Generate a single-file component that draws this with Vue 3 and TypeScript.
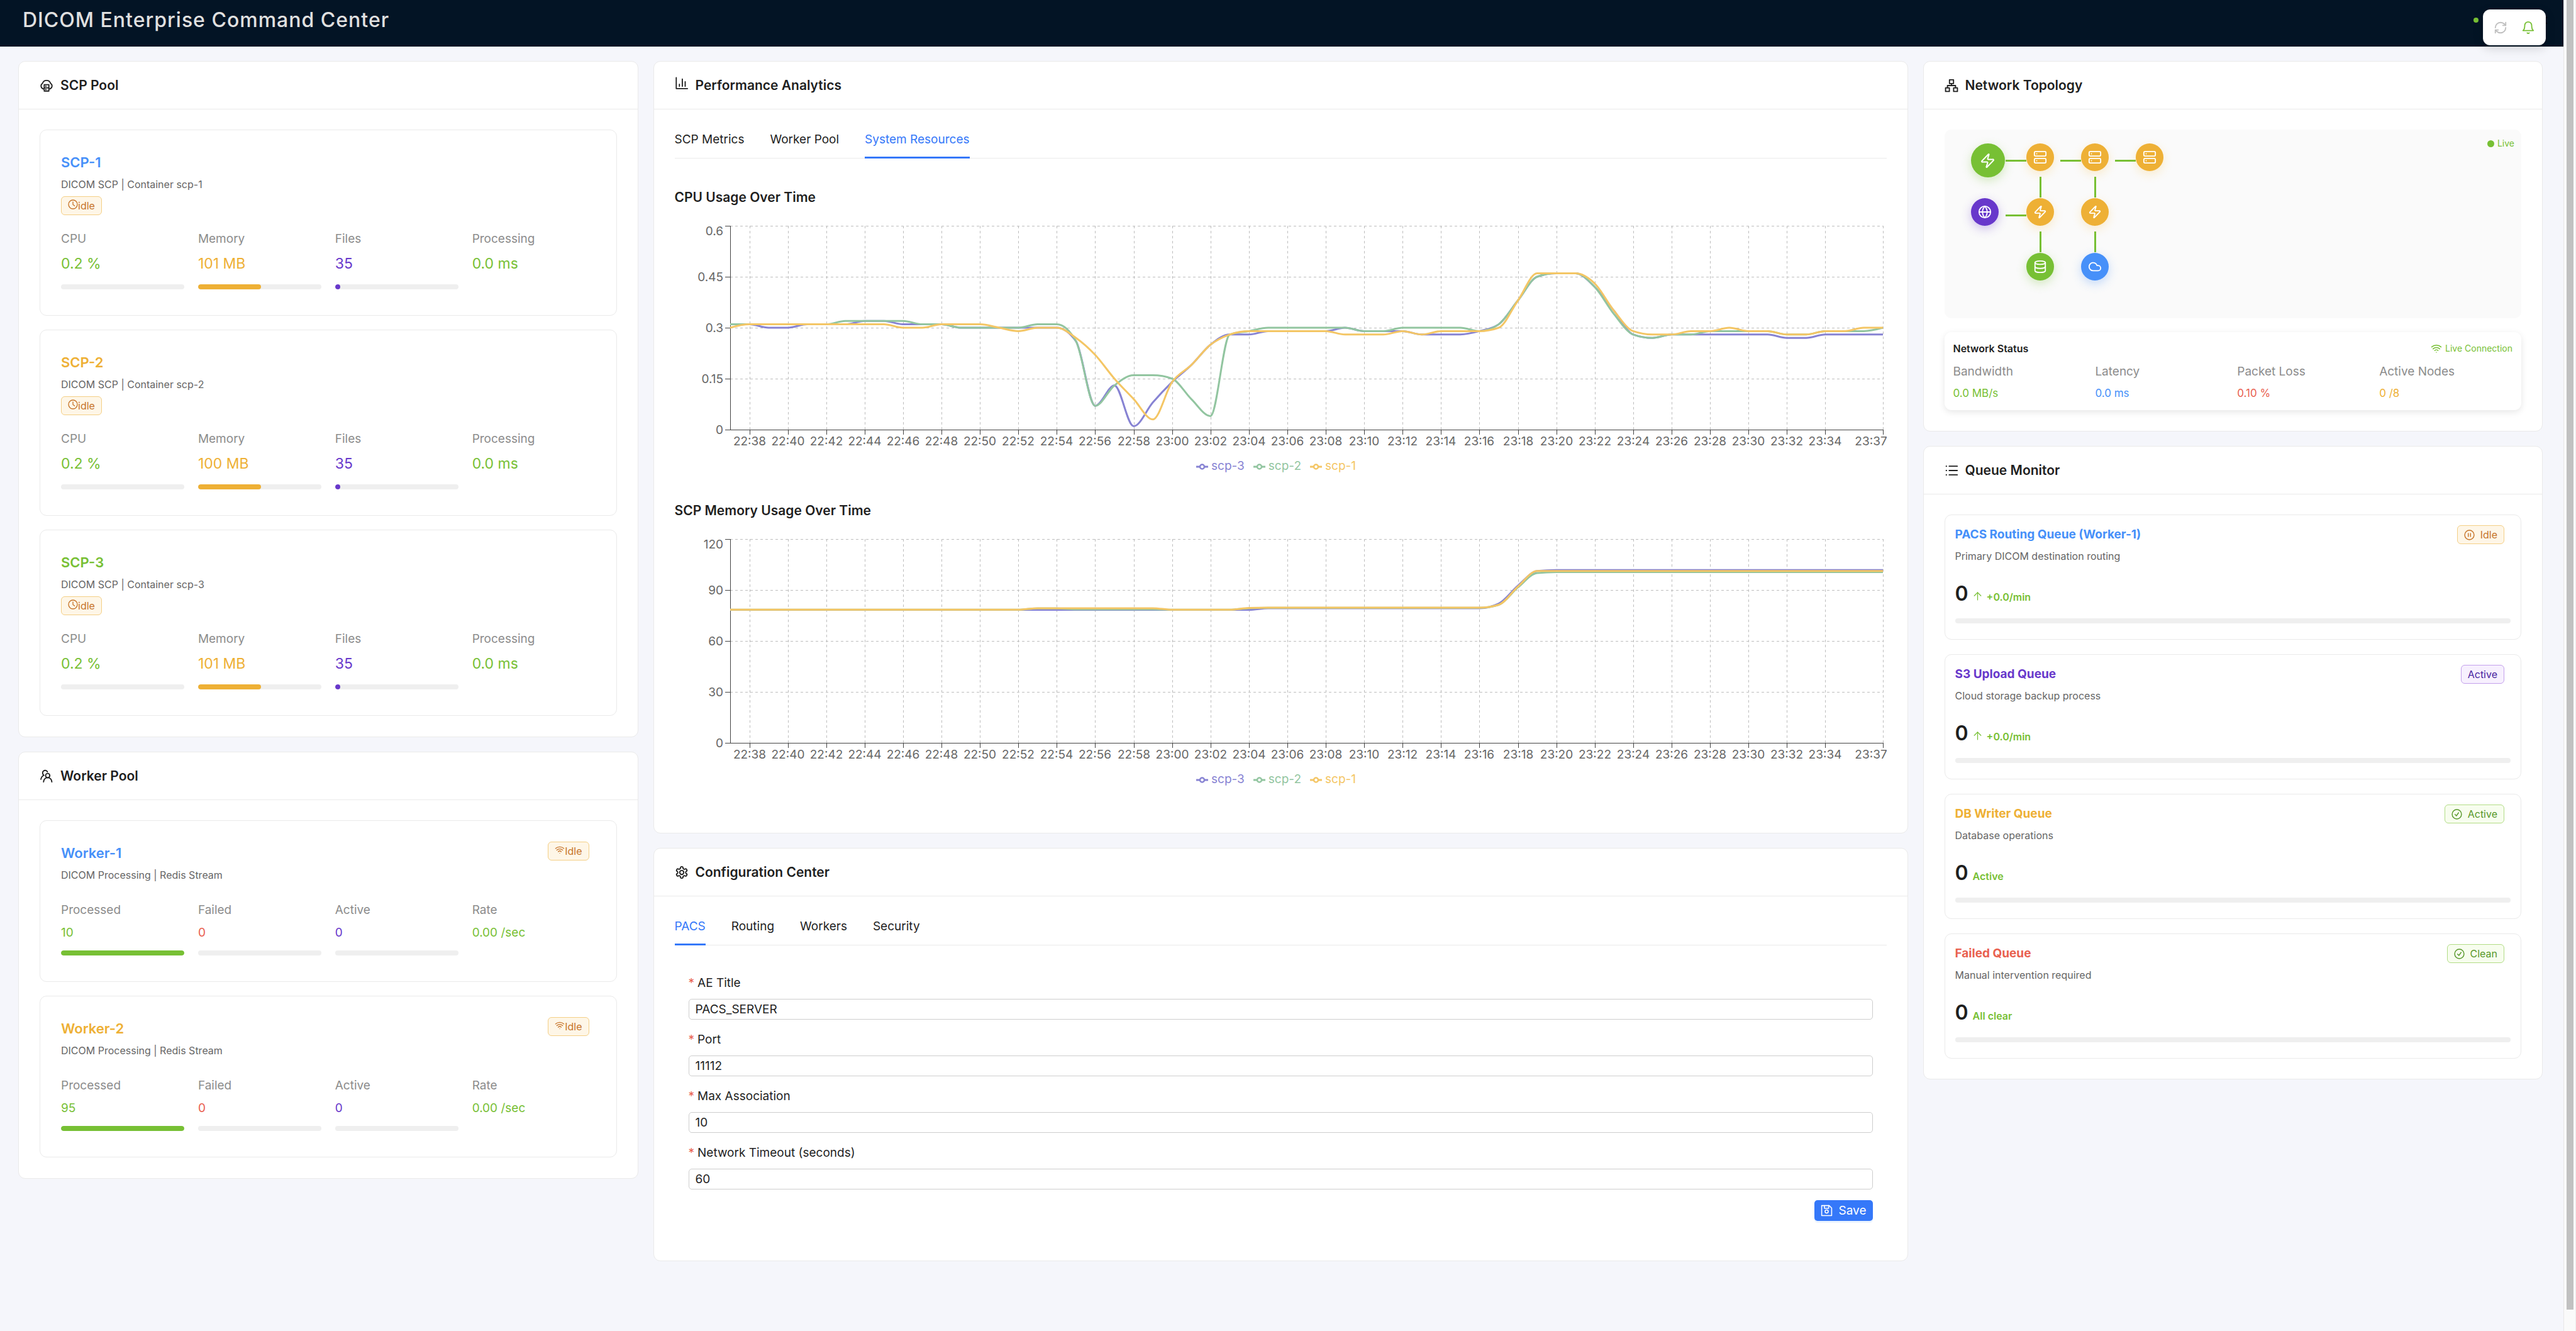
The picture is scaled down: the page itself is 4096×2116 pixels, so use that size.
<script setup lang="ts">
import { h, ref } from 'vue'

type IconProps = { name: string; size?: number; weight?: number }

const glyphs: Record<string, string[]> = {
  cloudServer: [
    'M6.5 18A5.4 5.4 0 0 1 5 8.2A7.4 7.4 0 0 1 19 8.2A5.4 5.4 0 0 1 17.5 18',
    'M8 10.5H16V21.5H8Z',
    'M8 16H16',
    'M10.6 13.3H11',
    'M10.6 18.8H11',
  ],
  team: [
    'M14 7.2a3.7 3.7 0 1 1 0 7.4a3.7 3.7 0 0 1 0-7.4Z',
    'M6.8 22c.5-4.6 3.4-7.4 7.2-7.4s6.7 2.8 7.2 7.4',
    'M13.6 4.6A4.4 4.4 0 1 0 6.6 9.6',
    'M7.4 10.4C4.4 11.6 2.8 14 2.2 17.4',
  ],
  bars: ['M2.5 1.5V20.5H22', 'M8 13V16.5', 'M13 4V16.5', 'M18 8.5V16.5'],
  apartment: [
    'M8.5 2H15.5V8.5H8.5Z',
    'M12 8.5V12',
    'M5 16V12H19V16',
    'M1.7 16H8.3V22.3H1.7Z',
    'M15.7 16H22.3V22.3H15.7Z',
  ],
  list: ['M8 4.5H22', 'M8 12H22', 'M8 19.5H22', 'M2.8 4.5H3.4', 'M2.8 12H3.4', 'M2.8 19.5H3.4'],
  gear: [
    'M12.22 2h-.44a2 2 0 0 0-2 2v.18a2 2 0 0 1-1 1.73l-.43.25a2 2 0 0 1-2 0l-.15-.08a2 2 0 0 0-2.73.73l-.22.38a2 2 0 0 0 .73 2.73l.15.1a2 2 0 0 1 1 1.72v.51a2 2 0 0 1-1 1.74l-.15.09a2 2 0 0 0-.73 2.73l.22.38a2 2 0 0 0 2.73.73l.15-.08a2 2 0 0 1 2 0l.43.25a2 2 0 0 1 1 1.73V20a2 2 0 0 0 2 2h.44a2 2 0 0 0 2-2v-.18a2 2 0 0 1 1-1.73l.43-.25a2 2 0 0 1 2 0l.15.08a2 2 0 0 0 2.73-.73l.22-.39a2 2 0 0 0-.73-2.73l-.15-.08a2 2 0 0 1-1-1.74v-.5a2 2 0 0 1 1-1.74l.15-.09a2 2 0 0 0 .73-2.73l-.22-.38a2 2 0 0 0-2.73-.73l-.15.08a2 2 0 0 1-2 0l-.43-.25a2 2 0 0 1-1-1.73V4a2 2 0 0 0-2-2z',
    'M12 8.5a3.5 3.5 0 1 1 0 7a3.5 3.5 0 0 1 0-7Z',
  ],
  clock: ['M12 1.5a10.5 10.5 0 1 1 0 21a10.5 10.5 0 0 1 0-21Z', 'M12 6V12.5L16 15.5'],
  wifi: [
    'M12 20h.01',
    'M2 8.82a15 15 0 0 1 20 0',
    'M5 12.859a10 10 0 0 1 14 0',
    'M8.5 16.429a5 5 0 0 1 7 0',
  ],
  pause: ['M12 1.5a10.5 10.5 0 1 1 0 21a10.5 10.5 0 0 1 0-21Z', 'M9.5 8.5V15.5', 'M14.5 8.5V15.5'],
  check: ['M12 1.5a10.5 10.5 0 1 1 0 21a10.5 10.5 0 0 1 0-21Z', 'M8 12.5L11 15.5L16 8.5'],
  up: ['M12 22V3', 'M3.5 11.5L12 3L20.5 11.5'],
  save: [
    'M2 2H17L22 7V22H2Z',
    'M7.5 2V7.5H16V2',
    'M12 10.8a3.2 3.2 0 1 1 0 6.4a3.2 3.2 0 0 1 0-6.4Z',
  ],
  zap: [
    'M4 14a1 1 0 0 1-.78-1.63l9.9-10.2a.5.5 0 0 1 .86.46l-1.92 6.02A1 1 0 0 0 13 10h7a1 1 0 0 1 .78 1.63l-9.9 10.2a.5.5 0 0 1-.86-.46l1.92-6.02A1 1 0 0 0 11 14z',
  ],
  server: [
    'M4 2H20a2 2 0 0 1 2 2V8a2 2 0 0 1-2 2H4a2 2 0 0 1-2-2V4a2 2 0 0 1 2-2Z',
    'M4 14H20a2 2 0 0 1 2 2V20a2 2 0 0 1-2 2H4a2 2 0 0 1-2-2V16a2 2 0 0 1 2-2Z',
    'M6 6H6.01',
    'M6 18H6.01',
  ],
  globe: [
    'M12 2a10 10 0 1 1 0 20a10 10 0 0 1 0-20Z',
    'M12 2a14.5 14.5 0 0 0 0 20 14.5 14.5 0 0 0 0-20',
    'M2 12h20',
  ],
  database: [
    'M3 5A9 3 0 0 1 21 5A9 3 0 0 1 3 5',
    'M3 5V19A9 3 0 0 0 21 19V5',
    'M3 12A9 3 0 0 0 21 12',
  ],
  cloud: ['M17.5 19H9a7 7 0 1 1 6.71-9h1.79a4.5 4.5 0 1 1 0 9Z'],
  refresh: [
    'M3 12a9 9 0 0 1 9-9 9.75 9.75 0 0 1 6.74 2.74L21 8',
    'M21 3v5h-5',
    'M21 12a9 9 0 0 1-9 9 9.75 9.75 0 0 1-6.74-2.74L3 16',
    'M8 16H3v5',
  ],
  bell: ['M6 8a6 6 0 0 1 12 0c0 7 3 9 3 9H3s3-2 3-9', 'M10.3 21a1.94 1.94 0 0 0 3.4 0'],
}

const Icon = (props: IconProps) =>
  h(
    'svg',
    {
      viewBox: '0 0 24 24',
      width: props.size ?? 22,
      height: props.size ?? 22,
      fill: 'none',
      stroke: 'currentColor',
      'stroke-width': props.weight ?? 2,
      'stroke-linecap': 'round',
      'stroke-linejoin': 'round',
      'aria-hidden': 'true',
    },
    (glyphs[props.name] ?? []).map((d) => h('path', { d })),
  )
Icon.props = ['name', 'size', 'weight']

interface Metric {
  label: string
  value: string
  tone: string
  percent?: number
}

const scps: { name: string; tone: string; detail: string; metrics: Metric[] }[] = [
  { n: 1, tone: 'blue', mb: 101 },
  { n: 2, tone: 'amber', mb: 100 },
  { n: 3, tone: 'green', mb: 101 },
].map((s) => ({
  name: `SCP-${s.n}`,
  tone: s.tone,
  detail: `DICOM SCP | Container scp-${s.n}`,
  metrics: [
    { label: 'CPU', value: '0.2 %', tone: 'green', percent: 0 },
    { label: 'Memory', value: `${s.mb} MB`, tone: 'amber', percent: 51 },
    { label: 'Files', value: '35', tone: 'purple', percent: 4 },
    { label: 'Processing', value: '0.0 ms', tone: 'green' },
  ],
}))

const workers: { name: string; tone: string; metrics: Metric[] }[] = [
  { n: 1, tone: 'blue', done: 10 },
  { n: 2, tone: 'amber', done: 95 },
].map((w) => ({
  name: `Worker-${w.n}`,
  tone: w.tone,
  metrics: [
    { label: 'Processed', value: String(w.done), tone: 'green', percent: 100 },
    { label: 'Failed', value: '0', tone: 'red', percent: 0 },
    { label: 'Active', value: '0', tone: 'purple', percent: 0 },
    { label: 'Rate', value: '0.00 /sec', tone: 'green' },
  ],
}))

const analyticsTabs = ['SCP Metrics', 'Worker Pool', 'System Resources']
const analyticsTab = ref('System Resources')
const configTabs = ['PACS', 'Routing', 'Workers', 'Security']
const configTab = ref('PACS')

const fields = ref([
  { id: 'ae-title', label: 'AE Title', value: 'PACS_SERVER' },
  { id: 'port', label: 'Port', value: '11112' },
  { id: 'max-association', label: 'Max Association', value: '10' },
  { id: 'network-timeout', label: 'Network Timeout (seconds)', value: '60' },
])

/* ---- charts ---- */
const plot = { left: 88, top: 8, width: 1833, height: 324 }
const plotRight = plot.left + plot.width
const plotBottom = plot.top + plot.height
const minutes = 60
const xAt = (i: number) => plot.left + (plot.width * i) / minutes

const timeTicks = [...Array.from({ length: 29 }, (_, k) => 1 + 2 * k), 60].map((i) => {
  const t = 22 * 60 + 37 + i
  const label = `${Math.floor(t / 60)}:${String(t % 60).padStart(2, '0')}`
  return { x: Math.round(xAt(i)), label, labelX: i === 60 ? plotRight - 19 : Math.round(xAt(i)) }
})

/* Monotone cubic interpolation through evenly spaced samples */
function curve(values: number[], max: number): string {
  const xs = values.map((_, i) => xAt(i))
  const ys = values.map((v) => plotBottom - (v / max) * plot.height)
  const step = plot.width / minutes
  const slope = (i: number) => (ys[i + 1] - ys[i]) / step
  const n = values.length
  const m = ys.map((_, i) => {
    if (i === 0 || i === n - 1) return 0
    const a = slope(i - 1)
    const b = slope(i)
    return (Math.sign(a) + Math.sign(b)) * Math.min(Math.abs(a), Math.abs(b), 0.5 * Math.abs((a + b) / 2))
  })
  m[0] = (3 * slope(0) - m[1]) / 2
  m[n - 1] = (3 * slope(n - 2) - m[n - 2]) / 2
  let d = `M${xs[0]},${ys[0]}`
  for (let i = 0; i < n - 1; i++) {
    const c = step / 3
    d += `C${xs[i] + c},${ys[i] + c * m[i]},${xs[i + 1] - c},${ys[i + 1] - c * m[i + 1]},${xs[i + 1]},${ys[i + 1]}`
  }
  return d
}

const rep = (v: number, n: number): number[] => Array(n).fill(v)
const colors = { 'scp-3': '#8783d3', 'scp-2': '#92c5a0', 'scp-1': '#f4c665' }

const cpu = {
  'scp-3': [31, 31, 30, 30, 31, 31, 31, 32, 32, 31, 31, 31, 30, 30, 30, 30, 30, 30, 26, 7, 13, 1, 8, 14, 19, 25, 28, 28, 29, 29, 29, 29, 30, 29, 29, 29, 28, 28, 28, 29, 31, 38, 45, 46, 46, 42, 35, 28, 27, 28, 28, 28, 28, 28, 28, 27, 27, 28, 28, 28, 28],
  'scp-2': [31, 31, 31, 31, 31, 31, 32, 32, 32, 32, 31, 31, 30, 30, 30, 30, 31, 31, 26, 7, 13, 16, 16, 15, 9, 4, 28, 29, 30, 30, 30, 30, 30, 29, 29, 30, 30, 30, 30, 29, 31, 38, 45, 46, 46, 42, 34, 28, 27, 28, 28, 29, 29, 29, 29, 28, 28, 29, 29, 29, 30],
  'scp-1': [30, 31, 31, 31, 31, 31, 31, 31, 31, 30, 30, 31, 31, 31, 30, 29, 30, 30, 27, 22, 15, 9, 3, 14, 19, 25, 28, 29, 29, 29, 29, 29, 28, 28, 28, 29, 28, 29, 29, 29, 30, 38, 46, 46, 46, 43, 35, 29, 28, 28, 29, 29, 30, 29, 29, 28, 28, 29, 29, 30, 30],
}
const memory = {
  'scp-3': [...rep(78.3, 28), ...rep(79.3, 12), 82, 92.5, 101.2, ...rep(101.8, 18)],
  'scp-2': [...rep(78.4, 16), 79.2, 79.2, ...rep(78.6, 5), ...rep(78.4, 4), 79.3, ...rep(79.5, 12), 81.3, 91.5, 100, ...rep(100.6, 18)],
  'scp-1': [...rep(78.4, 16), ...rep(79.3, 7), ...rep(78.4, 4), 79.4, ...rep(79.6, 12), 81.3, 92, ...rep(101.2, 19)],
}

function chart(title: string, data: Record<string, number[]>, max: number, labels: string[]) {
  return {
    title,
    yTicks: labels.map((label, k) => {
      const y = plotBottom - (plot.height * k) / (labels.length - 1)
      return { label, y, labelY: k === labels.length - 1 ? y + 15 : y + 7 }
    }),
    lines: Object.entries(data).map(([name, values]) => ({
      name,
      color: colors[name as keyof typeof colors],
      d: curve(values, max),
    })),
  }
}
const charts = [
  chart('CPU Usage Over Time', cpu, 60, ['0', '0.15', '0.3', '0.45', '0.6']),
  chart('SCP Memory Usage Over Time', memory, 120, ['0', '30', '60', '90', '120']),
]

/* ---- topology ---- */
const nodes = [
  { x: 42, y: 22, tone: 'green', icon: 'zap', hub: true },
  { x: 130, y: 22, tone: 'amber', icon: 'server' },
  { x: 217, y: 22, tone: 'amber', icon: 'server' },
  { x: 304, y: 22, tone: 'amber', icon: 'server' },
  { x: 42, y: 109, tone: 'purple', icon: 'globe' },
  { x: 130, y: 109, tone: 'amber', icon: 'zap' },
  { x: 217, y: 109, tone: 'amber', icon: 'zap' },
  { x: 130, y: 196, tone: 'green', icon: 'database' },
  { x: 217, y: 196, tone: 'blue', icon: 'cloud' },
]
const links = [
  { x: 97, y: 48 },
  { x: 184, y: 48 },
  { x: 271, y: 48 },
  { x: 97, y: 135 },
  { x: 151, y: 75, down: true },
  { x: 238, y: 75, down: true },
  { x: 151, y: 162, down: true },
  { x: 238, y: 162, down: true },
]

const networkMetrics: Metric[] = [
  { label: 'Bandwidth', value: '0.0 MB/s', tone: 'green' },
  { label: 'Latency', value: '0.0 ms', tone: 'blue' },
  { label: 'Packet Loss', value: '0.10 %', tone: 'red' },
  { label: 'Active Nodes', value: '0 /8', tone: 'amber' },
]

const queues = [
  { name: 'PACS Routing Queue (Worker-1)', tone: 'blue', detail: 'Primary DICOM destination routing', tag: 'Idle', tagTone: 'tag-amber', icon: 'pause', note: '+0.0/min', rising: true },
  { name: 'S3 Upload Queue', tone: 'purple', detail: 'Cloud storage backup process', tag: 'Active', tagTone: 'tag-purple', icon: '', note: '+0.0/min', rising: true },
  { name: 'DB Writer Queue', tone: 'amber', detail: 'Database operations', tag: 'Active', tagTone: 'tag-green', icon: 'check', note: 'Active', rising: false },
  { name: 'Failed Queue', tone: 'red', detail: 'Manual intervention required', tag: 'Clean', tagTone: 'tag-green', icon: 'check', note: 'All clear', rising: false },
]
</script>

<template>
  <div class="shell">
    <div class="page">
      <header class="topbar">
        <h1>DICOM Enterprise Command Center</h1>
        <div class="health"><span class="health-dot"></span><span class="health-text">t</span></div>
        <div class="actions">
          <button type="button" class="icon-button muted" aria-label="Refresh"><Icon name="refresh" /></button>
          <button type="button" class="icon-button green" aria-label="Notifications"><Icon name="bell" /></button>
        </div>
      </header>

      <main class="columns">
        <div class="column">
          <section class="card">
            <h2 class="card-head"><Icon name="cloudServer" />SCP Pool</h2>
            <div class="card-body stack">
              <article v-for="scp in scps" :key="scp.name" class="tile scp">
                <h3 :class="scp.tone">{{ scp.name }}</h3>
                <p class="detail">{{ scp.detail }}</p>
                <span class="tag tag-amber tight"><Icon name="clock" :size="16" />idle</span>
                <div class="metrics">
                  <div v-for="m in scp.metrics" :key="m.label">
                    <div class="metric-label">{{ m.label }}</div>
                    <div class="metric-value" :class="m.tone">{{ m.value }}</div>
                    <div v-if="m.percent !== undefined" class="bar" :class="m.tone">
                      <span :style="{ width: m.percent + '%' }"></span>
                    </div>
                  </div>
                </div>
              </article>
            </div>
          </section>

          <section class="card">
            <h2 class="card-head"><Icon name="team" />Worker Pool</h2>
            <div class="card-body stack">
              <article v-for="w in workers" :key="w.name" class="tile worker">
                <div class="tile-head">
                  <h3 :class="w.tone">{{ w.name }}</h3>
                  <span class="tag tag-amber tight"><Icon name="wifi" :size="16" />Idle</span>
                </div>
                <p class="detail">DICOM Processing | Redis Stream</p>
                <div class="metrics">
                  <div v-for="m in w.metrics" :key="m.label">
                    <div class="metric-label">{{ m.label }}</div>
                    <div class="metric-value" :class="m.tone">{{ m.value }}</div>
                    <div v-if="m.percent !== undefined" class="bar" :class="m.tone">
                      <span :style="{ width: m.percent + '%' }"></span>
                    </div>
                  </div>
                </div>
              </article>
            </div>
          </section>
        </div>

        <div class="column wide">
          <section class="card">
            <h2 class="card-head"><Icon name="bars" class="raised" />Performance Analytics</h2>
            <div class="card-body analytics">
              <div class="tabs" role="tablist">
                <button
                  v-for="t in analyticsTabs"
                  :key="t"
                  type="button"
                  role="tab"
                  class="tab"
                  :class="{ active: t === analyticsTab }"
                  :aria-selected="t === analyticsTab"
                  @click="analyticsTab = t"
                >{{ t }}</button>
              </div>
              <section v-for="c in charts" :key="c.title" class="chart">
                <h3>{{ c.title }}</h3>
                <svg viewBox="0 0 1927 372" role="img" :aria-label="c.title">
                  <g stroke="#bebebe" stroke-dasharray="4 4">
                    <line v-for="y in c.yTicks" :key="y.label" :x1="plot.left" :x2="plotRight" :y1="y.y" :y2="y.y" shape-rendering="crispEdges" />
                    <line v-for="t in timeTicks" :key="t.label" :x1="t.x" :x2="t.x" :y1="plot.top" :y2="plotBottom" shape-rendering="crispEdges" />
                  </g>
                  <g stroke="#444" shape-rendering="crispEdges">
                    <line :x1="plot.left" :x2="plotRight" :y1="plotBottom" :y2="plotBottom" />
                    <line :x1="plot.left" :x2="plot.left" :y1="plot.top" :y2="plotBottom" />
                    <line v-for="y in c.yTicks" :key="y.label" :x1="plot.left - 8" :x2="plot.left" :y1="y.y" :y2="y.y" />
                    <line v-for="t in timeTicks" :key="t.label" :x1="t.x" :x2="t.x" :y1="plotBottom" :y2="plotBottom + 8" />
                  </g>
                  <g fill="#666" font-size="19">
                    <text v-for="y in c.yTicks" :key="y.label" :x="plot.left - 11" :y="y.labelY" text-anchor="end">{{ y.label }}</text>
                    <text v-for="t in timeTicks" :key="t.label" :x="t.labelX" :y="plotBottom + 25" text-anchor="middle">{{ t.label }}</text>
                  </g>
                  <path v-for="l in c.lines" :key="l.name" :d="l.d" :stroke="l.color" fill="none" stroke-width="3" />
                </svg>
                <ul class="legend">
                  <li v-for="l in c.lines" :key="l.name" :style="{ color: l.color }">
                    <svg width="19" height="19" viewBox="0 0 19 19" fill="none" stroke="currentColor" stroke-width="3">
                      <path d="M0 10H6M13 10H19" />
                      <circle cx="9.5" cy="10" r="3.5" stroke-width="2.5" />
                    </svg>
                    {{ l.name }}
                  </li>
                </ul>
              </section>
            </div>
          </section>

          <section class="card">
            <h2 class="card-head"><Icon name="gear" />Configuration Center</h2>
            <div class="card-body config">
              <div class="tabs" role="tablist">
                <button
                  v-for="t in configTabs"
                  :key="t"
                  type="button"
                  role="tab"
                  class="tab"
                  :class="{ active: t === configTab }"
                  :aria-selected="t === configTab"
                  @click="configTab = t"
                >{{ t }}</button>
              </div>
              <form class="form" @submit.prevent>
                <div v-for="f in fields" :key="f.id" class="field">
                  <label :for="f.id"><span class="required">*</span>{{ f.label }}</label>
                  <input :id="f.id" v-model="f.value" type="text" />
                </div>
                <button type="submit" class="save"><Icon name="save" :size="19" />Save</button>
              </form>
            </div>
          </section>
        </div>

        <div class="column">
          <section class="card">
            <h2 class="card-head"><Icon name="apartment" />Network Topology</h2>
            <div class="card-body">
              <div class="topology">
                <span
                  v-for="(l, i) in links"
                  :key="'l' + i"
                  class="link"
                  :class="{ down: l.down }"
                  :style="{ left: l.x + 'px', top: l.y + 'px' }"
                ></span>
                <span
                  v-for="(n, i) in nodes"
                  :key="'n' + i"
                  class="node"
                  :class="['node-' + n.tone, { hub: n.hub }]"
                  :style="{ left: n.x + 'px', top: n.y + 'px' }"
                ><Icon :name="n.icon" :size="n.hub ? 25 : 22" /></span>
                <span class="live"><span class="live-dot"></span>Live</span>
              </div>
              <div class="status">
                <div class="status-head">
                  <h3>Network Status</h3>
                  <span class="connection"><Icon name="wifi" :size="18" />Live Connection</span>
                </div>
                <div class="metrics">
                  <div v-for="m in networkMetrics" :key="m.label">
                    <div class="metric-label">{{ m.label }}</div>
                    <div class="metric-value" :class="m.tone">{{ m.value }}</div>
                  </div>
                </div>
              </div>
            </div>
          </section>

          <section class="card">
            <h2 class="card-head"><Icon name="list" />Queue Monitor</h2>
            <div class="card-body stack queues">
              <article v-for="q in queues" :key="q.name" class="tile queue">
                <div class="tile-head">
                  <h3 :class="q.tone">{{ q.name }}</h3>
                  <span class="tag" :class="q.tagTone"><Icon v-if="q.icon" :name="q.icon" :size="17" />{{ q.tag }}</span>
                </div>
                <p class="detail">{{ q.detail }}</p>
                <div class="count">
                  <strong>0</strong>
                  <Icon v-if="q.rising" name="up" :size="15" class="green" />
                  <span class="note green">{{ q.note }}</span>
                </div>
                <div class="bar"></div>
              </article>
            </div>
          </section>
        </div>
      </main>
    </div>
    <div class="rail" aria-hidden="true"><div class="thumb"></div></div>
  </div>
</template>

<style>
body {
  background: #f5f6fb;
}
</style>

<style scoped>
* {
  box-sizing: border-box;
}
h1, h2, h3, p, ul {
  margin: 0;
  padding: 0;
}
button, input {
  font: inherit;
  color: inherit;
}
.shell {
  display: flex;
  min-height: 100vh;
  font-family: Inter, "Noto Sans", sans-serif;
  font-size: 19px;
  line-height: 30px;
  color: #1f1f1f;
}
.page {
  flex: 1;
  min-width: 0;
}
.rail {
  width: 20px;
  height: 100vh;
  padding: 0 4px;
  background: #fafafa;
  border-left: 1px solid #e8e8e8;
  border-right: 1px solid #ededed;
}
.thumb {
  height: 98.4%;
  width: 11px;
  background: #c1c1c1;
}
.blue { color: #4690f9; }
.amber { color: #eeb035; }
.green { color: #77c034; }
.purple { color: #6838cb; }
.red { color: #e9604f; }

.topbar {
  position: relative;
  display: flex;
  justify-content: space-between;
  align-items: center;
  height: 75px;
  padding: 0 25px 11px 36px;
  background: #031425;
  border-bottom: 1px solid #e4e4e4;
}
.topbar h1 {
  font-size: 32px;
  line-height: 44px;
  font-weight: 500;
  letter-spacing: 1px;
  color: #e0e0e0;
}
.health {
  display: flex;
  justify-content: space-between;
  align-items: center;
  width: 118px;
}
.health-dot {
  width: 8px;
  height: 8px;
  border-radius: 50%;
  background: #77c034;
}
.health-text {
  color: #000;
}
.actions {
  position: absolute;
  top: 15px;
  right: 28px;
  display: flex;
  align-items: center;
  gap: 22px;
  height: 57px;
  padding: 0 16px;
  background: #fff;
  border: 1px solid #f0f0f0;
  border-radius: 11px;
  box-shadow: 0 5px 16px rgba(0, 0, 0, 0.15);
}
.icon-button {
  display: flex;
  padding: 0;
  border: 0;
  background: none;
}
.muted {
  color: #bfbfbf;
}

.columns {
  display: grid;
  grid-template-columns: repeat(4, minmax(0, 1fr));
  gap: 24px;
  align-items: start;
  padding: 22px 33px 24px 29px;
}
.column {
  display: flex;
  flex-direction: column;
  gap: 23px;
}
.wide {
  grid-column: span 2;
}
.card {
  background: #fff;
  border: 1px solid #eaeaea;
  border-radius: 11px;
}
.card-head {
  display: flex;
  align-items: center;
  gap: 11px;
  height: 76px;
  padding: 0 33px;
  border-bottom: 1px solid #eaeaea;
  font-size: 21px;
  line-height: 34px;
  font-weight: 600;
}
.raised {
  margin-bottom: 6px;
}
.card-body {
  padding: 32px 33px 33px;
}
.stack {
  display: flex;
  flex-direction: column;
  gap: 22px;
}
.queues {
  gap: 23px;
  padding-bottom: 32px;
}
.tile {
  background: #fff;
  border: 1px solid #eaeaea;
  border-radius: 11px;
}
.tile h3 {
  font-size: 22px;
  line-height: 36px;
  font-weight: 600;
}
.tile-head {
  display: flex;
  justify-content: space-between;
  align-items: flex-start;
  padding-right: 10px;
}
.detail {
  margin-top: 5px;
  font-size: 16px;
  line-height: 24px;
  color: #666;
}
.scp {
  padding: 33px 33px 41px;
}
.scp .tag {
  margin-top: 7px;
}
.scp .metrics {
  margin-top: 23px;
}
.scp .metric-value {
  margin-top: 6px;
  font-size: 23px;
}
.scp .bar {
  margin-top: 15px;
}
.worker {
  padding: 33px 33px 41px;
}
.worker .metrics {
  margin-top: 29px;
}
.worker .metric-value {
  margin-top: 3px;
}
.worker .bar {
  margin-top: 10px;
}
.metrics {
  display: grid;
  grid-template-columns: repeat(4, minmax(0, 1fr));
  gap: 22px;
}
.metric-label {
  color: #8c8c8c;
}
.metric-value {
  line-height: 36px;
}
.bar {
  height: 8px;
  border-radius: 4px;
  background: #efefef;
  overflow: hidden;
}
.bar span {
  display: block;
  height: 100%;
  border-radius: 4px;
  background: currentColor;
}
.tag {
  display: flex;
  align-items: center;
  width: fit-content;
  gap: 9px;
  height: 30px;
  padding: 0 10px;
  border: 1px solid;
  border-radius: 6px;
  font-size: 16px;
}
.tight {
  gap: 0;
}
.tight svg {
  margin-bottom: 4px;
}
.tag-amber {
  color: #c7752b;
  background: #fef6e7;
  border-color: #f4cf85;
}
.tag-purple {
  color: #4a25a0;
  background: #f7f0fe;
  border-color: #c4a0ec;
}
.tag-green {
  color: #58982b;
  background: #f7fdee;
  border-color: #b2dd85;
}

.tabs {
  display: flex;
  gap: 41px;
  height: 46px;
  border-bottom: 1px solid #eaeaea;
}
.tab {
  height: 46px;
  padding: 0 0 11px;
  border: 0;
  border-bottom: 3px solid transparent;
  background: none;
}
.tab.active {
  color: #3578f9;
  border-bottom-color: #3578f9;
}
.analytics {
  padding-bottom: 67px;
}
.chart {
  margin-top: 36px;
}
.tabs + .chart {
  margin-top: 45px;
}
.chart h3 {
  margin-bottom: 20px;
  font-size: 21px;
  line-height: 34px;
  font-weight: 600;
}
.chart > svg {
  display: block;
  width: 100%;
}
.legend {
  display: flex;
  justify-content: center;
  height: 36px;
  list-style: none;
  line-height: 36px;
}
.legend li {
  display: flex;
  align-items: center;
  gap: 5px;
  margin-right: 14px;
}

.config {
  padding-bottom: 43px;
}
.form {
  display: flex;
  flex-direction: column;
  gap: 17px;
  margin-top: 23px;
  padding: 22px 22px 20px;
}
.field label {
  display: flex;
  gap: 5px;
  margin-bottom: 10px;
}
.required {
  color: #e9604f;
}
.field input {
  display: block;
  width: 100%;
  height: 33px;
  padding: 0 10px;
  border: 1px solid #cecece;
  border-radius: 5px;
  background: #fff;
}
.save {
  display: flex;
  align-items: center;
  align-self: flex-end;
  gap: 10px;
  height: 33px;
  padding: 0 10px;
  border: 0;
  border-radius: 5px;
  background: #3578f9;
  color: #fff;
  box-shadow: 0 3px 0 rgba(5, 120, 255, 0.08);
}

.topology {
  position: relative;
  height: 300px;
  border-radius: 11px;
  background: #fafafa;
}
.link {
  position: absolute;
  width: 33px;
  height: 3px;
  background: #77c034;
}
.link.down {
  width: 3px;
  height: 33px;
}
.node {
  position: absolute;
  display: flex;
  align-items: center;
  justify-content: center;
  width: 44px;
  height: 44px;
  border-radius: 50%;
  color: #fff;
}
.node.hub {
  width: 54px;
  height: 54px;
}
.node-green {
  background: #77c034;
  box-shadow: 0 5px 16px rgba(119, 192, 52, 0.3);
}
.node-amber {
  background: #eeb035;
  box-shadow: 0 5px 16px rgba(250, 173, 20, 0.2);
}
.node-purple {
  background: #6838cb;
  box-shadow: 0 5px 16px rgba(104, 56, 203, 0.3);
}
.node-blue {
  background: #4690f9;
  box-shadow: 0 5px 16px rgba(70, 144, 249, 0.3);
}
.live {
  position: absolute;
  top: 11px;
  right: 11px;
  display: flex;
  align-items: center;
  gap: 5px;
  font-size: 14px;
  line-height: 22px;
  color: #77c034;
}
.live-dot {
  width: 11px;
  height: 11px;
  border-radius: 50%;
  background: #77c034;
}
.status {
  margin-top: 22px;
  padding: 14px;
  border-radius: 11px;
  background: #fff;
  box-shadow: 0 3px 11px rgba(0, 0, 0, 0.1);
}
.status-head {
  display: flex;
  justify-content: space-between;
  align-items: center;
}
.status h3 {
  font-size: 16px;
  line-height: 24px;
  font-weight: 600;
}
.connection {
  display: flex;
  align-items: center;
  gap: 5px;
  font-size: 14px;
  line-height: 24px;
  color: #77c034;
}
.status .metrics {
  gap: 14px;
  margin-top: 10px;
}
.status .metric-value {
  margin-top: 6px;
  font-size: 17px;
  line-height: 26px;
}

.queue {
  padding: 16px 16px 25px;
}
.queue h3 {
  font-size: 19px;
  line-height: 30px;
  font-weight: 700;
}
.queue .detail {
  margin-top: 7px;
}
.count {
  display: flex;
  align-items: baseline;
  gap: 7px;
  margin-top: 26px;
  height: 44px;
  line-height: 44px;
}
.count strong {
  font-size: 32px;
  font-weight: 600;
}
.note {
  font-size: 16px;
  font-weight: 600;
}
.queue .bar {
  margin-top: 17px;
}
</style>
